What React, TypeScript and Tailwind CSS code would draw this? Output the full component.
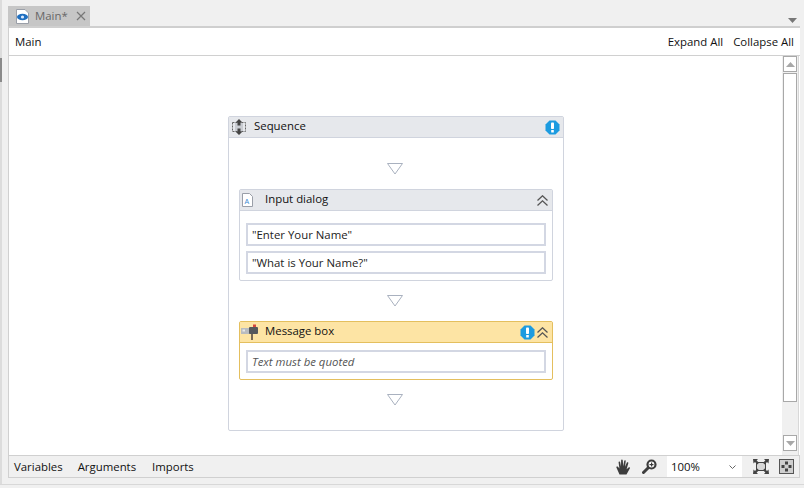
import React from "react";

const F = '[font-family:"Open_Sans","Noto_Sans",sans-serif]';

function Drop() {
  return (
    <svg width="16" height="12" viewBox="0 0 16 12" className="block -ml-[2px]">
      <path d="M0.5 0.5H15.5L8 11Z" fill="#fff" stroke="#a9b1bf" />
    </svg>
  );
}

function Warn() {
  return (
    <svg width="15" height="15" viewBox="0 0 15 15" className="block">
      <path d="M4.5 0.5H10.5L14.5 4.5V10.5L10.5 14.5H4.5L0.5 10.5V4.5Z" fill="#1c9be0" />
      <rect x="6" y="2.5" width="3" height="6.5" rx="0.8" fill="#fff" />
      <rect x="6.2" y="10" width="2.6" height="2.5" fill="#fff" />
    </svg>
  );
}

function Chev() {
  return (
    <svg width="11" height="11" viewBox="0 0 11 11" className="block" fill="none" stroke="#555" strokeWidth="1.3">
      <path d="M0.5 5.5L5.5 0.8L10.5 5.5" />
      <path d="M0.5 10.5L5.5 5.8L10.5 10.5" />
    </svg>
  );
}

function Field({ text, italic }: { text: string; italic?: boolean }) {
  return (
    <div
      className={`h-[23px] border-2 border-[#d3d7e3] bg-white pl-[4px] flex items-center text-[11.4px] ${
        italic ? "italic text-[#555]" : "text-[#222]"
      }`}
    >
      {text}
    </div>
  );
}

function SequenceIcon() {
  return (
    <svg width="16" height="16" viewBox="0 0 16 16" className="block">
      <rect x="1.5" y="3.5" width="13" height="9" fill="none" stroke="#666" strokeDasharray="2 1" />
      <rect x="4" y="4" width="8" height="8" fill="#c9ccd2" />
      <path d="M8 0L11.5 3.5H9.5V6.5H6.5V3.5H4.5Z" fill="#444" />
      <path d="M8 16L11.5 12.5H9.5V9.5H6.5V12.5H4.5Z" fill="#444" />
    </svg>
  );
}

function DocIcon() {
  return (
    <svg width="11" height="14" viewBox="0 0 11 14" className="block">
      <path d="M0.5 0.5H7.5L10.5 3.5V13.5H0.5Z" fill="#fff" stroke="#9a9fa8" />
      <text x="2.6" y="10.5" fontSize="7" fontFamily="Liberation Sans" fill="#3b8ad0">A</text>
    </svg>
  );
}

function MailIcon() {
  return (
    <svg width="18" height="16" viewBox="0 0 18 16" className="block">
      <rect x="0" y="4" width="9" height="6" fill="#b9bcc0" />
      <rect x="1.5" y="5.5" width="2.5" height="2" fill="#e8e8e8" />
      <rect x="8" y="3" width="9" height="7" rx="1" fill="#55585c" />
      <rect x="10" y="10" width="2" height="6" fill="#7a6a55" />
      <rect x="12" y="0.5" width="3" height="2.5" fill="#d5463c" />
    </svg>
  );
}

function Hand() {
  return (
    <svg width="15" height="16" viewBox="0 0 15 16" className="block" fill="#3d3d3d">
      <path d="M3.5 15.5L0.4 8.6C0 7.6 1.3 6.9 2 7.8L3.4 9.4L2.6 3.4C2.5 2.4 3.9 2.1 4.1 3.1L5 7.4L5.1 1.4C5.1 0.3 6.7 0.3 6.8 1.4L7.2 7.2L8.2 1.9C8.4 0.9 9.9 1.1 9.7 2.2L9 7.8L10.9 3.6C11.3 2.7 12.7 3.2 12.3 4.3L10.6 10.2L12.6 8.5C13.4 7.8 14.5 8.7 13.8 9.6L10.5 15.5Z" />
    </svg>
  );
}

function Zoom() {
  return (
    <svg width="15" height="15" viewBox="0 0 15 15" className="block">
      <path d="M6.5 8.5L1.5 13.5" stroke="#3d3d3d" strokeWidth="3" strokeLinecap="round" />
      <circle cx="9.5" cy="5.5" r="4" fill="#fff" stroke="#3d3d3d" strokeWidth="2.2" />
      <rect x="7.5" y="5" width="4" height="1.2" fill="#3d3d3d" />
      <rect x="9" y="3.5" width="1.2" height="4" fill="#3d3d3d" />
    </svg>
  );
}

function FitIcon() {
  return (
    <svg width="16" height="15" viewBox="0 0 16 15" className="block" fill="#444">
      <rect x="3.5" y="3.5" width="9" height="8" fill="#d8d8d8" stroke="#444" />
      <path d="M0 0H5L3.6 1.4L6 3.8L4.4 5.4L2 3L0.5 4.5Z" />
      <path d="M16 0H11L12.4 1.4L10 3.8L11.6 5.4L14 3L15.5 4.5Z" />
      <path d="M0 15H5L3.6 13.6L6 11.2L4.4 9.6L2 12L0.5 10.5Z" />
      <path d="M16 15H11L12.4 13.6L10 11.2L11.6 9.6L14 12L15.5 10.5Z" />
    </svg>
  );
}

function ActualIcon() {
  return (
    <svg width="15" height="15" viewBox="0 0 15 15" className="block">
      <rect x="0.5" y="0.5" width="14" height="14" fill="#cfcfcf" stroke="#555" />
      <rect x="6" y="2.5" width="3" height="3" fill="#444" />
      <rect x="6" y="9.5" width="3" height="3" fill="#444" />
      <rect x="2.5" y="6" width="3" height="3" fill="#444" />
      <rect x="9.5" y="6" width="3" height="3" fill="#444" />
    </svg>
  );
}

export default function App() {
  return (
    <div className={`w-[804px] h-[488px] bg-[#f0f0f0] flex overflow-hidden text-[11.4px] text-[#111] ${F}`}>
      <div className="w-[8px] shrink-0 pt-[58px] border-l-2 border-[#dcdcdc] h-[484px]">
        <div className="-ml-[2px] w-[2px] h-[24px] bg-[#8a8a8a]" />
      </div>
      <div className="w-[792px] shrink-0 flex flex-col">
        <div className="h-[26px] pt-[6px] flex justify-between shrink-0">
          <div className="w-[82px] h-[20px] bg-[#c6c6c6] flex items-center pl-[8px] text-[#666]">
            <svg width="13" height="15" viewBox="0 0 13 15" className="block">
              <path d="M0.5 0.5H9L12.5 4V14.5H0.5Z" fill="#fff" stroke="#9a9fa8" />
              <ellipse cx="6.5" cy="8" rx="5.5" ry="3.2" fill="#1f6fc0" />
              <circle cx="6.5" cy="8" r="1.6" fill="#dbeafe" />
            </svg>
            <span className="ml-[6px]">Main*</span>
            <svg width="10" height="10" viewBox="0 0 10 10" className="block ml-[8px]" stroke="#777" strokeWidth="1.2">
              <path d="M1 1L9 9M9 1L1 9" />
            </svg>
          </div>
          <svg width="9" height="5" viewBox="0 0 9 5" className="block mt-[12px] mr-[3px]">
            <path d="M0 0H9L4.5 5Z" fill="#777" />
          </svg>
        </div>
        <div className="h-[2px] bg-[#cfcfcf] shrink-0" />
        <div className="h-[28px] bg-white border-b border-[#d0d0d0] border-l shrink-0 flex items-center justify-between pl-[6px] pr-[6px]">
          <span>Main</span>
          <div className="flex gap-[10px]">
            <span>Expand All</span>
            <span>Collapse All</span>
          </div>
        </div>
        <div className="h-[399px] bg-white flex shrink-0 border-l border-[#d0d0d0]">
          <div className="w-[773px] flex justify-center pt-[60px] pl-[1px] shrink-0">
            <div className="w-[336px] h-[315px] border border-[#d0d4de] rounded-[2px] flex flex-col items-center">
              <div className="w-full h-[21px] bg-[#e6e8ec] border-b border-[#d0d4de] flex items-center pl-[2px] pr-[3px] shrink-0">
                <SequenceIcon />
                <span className="ml-[7px] flex-1 mb-[2px]">Sequence</span>
                <Warn />
              </div>
              <div className="mt-[25px]">
                <Drop />
              </div>
              <div className="mt-[14px] w-[314px] h-[92px] border border-[#d0d4de] rounded-[2px] flex flex-col shrink-0">
                <div className="h-[21px] bg-[#e6e8ec] border-b border-[#d0d4de] flex items-center pl-[2px] pr-[4px] shrink-0">
                  <DocIcon />
                  <span className="ml-[12px] flex-1 mb-[2px]">Input dialog</span>
                  <Chev />
                </div>
                <div className="px-[6px] pt-[12px] flex flex-col gap-[5px]">
                  <Field text={'"Enter Your Name"'} />
                  <Field text={'"What is Your Name?"'} />
                </div>
              </div>
              <div className="mt-[14px]">
                <Drop />
              </div>
              <div className="mt-[14px] w-[314px] h-[59px] border border-[#e4bf5e] rounded-[2px] flex flex-col shrink-0">
                <div className="h-[21px] bg-[#fde4a4] border-b border-[#e4bf5e] flex items-center pl-[1px] pr-[4px] shrink-0">
                  <MailIcon />
                  <span className="ml-[6px] flex-1 mb-[2px]">Message box</span>
                  <Warn />
                  <div className="ml-[2px]">
                    <Chev />
                  </div>
                </div>
                <div className="px-[6px] pt-[7px]">
                  <Field text="Text must be quoted" italic />
                </div>
              </div>
              <div className="mt-[14px]">
                <Drop />
              </div>
            </div>
          </div>
          <div className="w-[17px] bg-[#f0f0f0] flex flex-col px-[1px] shrink-0 border-r border-[#d8d8d8]">
            <div className="h-[16px] border border-[#a8a8a8] bg-white flex items-center justify-center shrink-0">
              <svg width="9" height="5" viewBox="0 0 9 5"><path d="M0 5H9L4.5 0Z" fill="#a8a8a8" /></svg>
            </div>
            <div className="h-[329px] mt-[1px] border border-[#a8a8a8] bg-white shrink-0" />
            <div className="flex-1" />
            <div className="h-[16px] mb-[4px] border border-[#a8a8a8] bg-white flex items-center justify-center shrink-0">
              <svg width="9" height="5" viewBox="0 0 9 5"><path d="M0 0H9L4.5 5Z" fill="#a8a8a8" /></svg>
            </div>
          </div>
        </div>
        <div className="h-[23px] bg-[#f0f0f0] border border-[#d0d0d0] shrink-0 flex items-center pl-[5px] pr-[5px]">
          <span>Variables</span>
          <span className="ml-[15px]">Arguments</span>
          <span className="ml-[16px]">Imports</span>
          <div className="flex-1" />
          <Hand />
          <div className="ml-[11px]"><Zoom /></div>
          <div className="ml-[10px] w-[75px] h-[21px] bg-white flex items-center pl-[4px] pr-[6px] justify-between">
            <span>100%</span>
            <svg width="7" height="4" viewBox="0 0 7 4" fill="none" stroke="#666"><path d="M0.5 0.5L3.5 3.5L6.5 0.5" /></svg>
          </div>
          <div className="ml-[11px]"><FitIcon /></div>
          <div className="ml-[10px]"><ActualIcon /></div>
        </div>
        <div className="h-[7px] border-b border-[#d8d8d8] -mr-[4px] -ml-[8px] shrink-0" />
      </div>
    </div>
  );
}
